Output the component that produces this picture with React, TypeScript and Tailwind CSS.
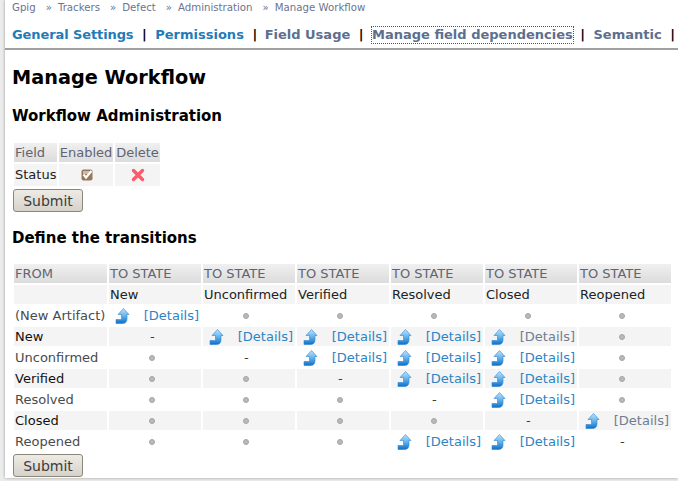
type Cell = "dot" | "dash" | "link" | "muted";

const states = ["New", "Unconfirmed", "Verified", "Resolved", "Closed", "Reopened"];

const rows: { name: string; strong?: boolean; cells: Cell[] }[] = [
  { name: "(New Artifact)", cells: ["link", "dot", "dot", "dot", "dot", "dot"] },
  { name: "New", strong: true, cells: ["dash", "link", "link", "link", "muted", "dot"] },
  { name: "Unconfirmed", cells: ["dot", "dash", "link", "link", "link", "dot"] },
  { name: "Verified", strong: true, cells: ["dot", "dot", "dash", "link", "link", "dot"] },
  { name: "Resolved", cells: ["dot", "dot", "dot", "dash", "link", "dot"] },
  { name: "Closed", strong: true, cells: ["dot", "dot", "dot", "dot", "dash", "muted"] },
  { name: "Reopened", cells: ["dot", "dot", "dot", "link", "link", "dash"] },
];

const crumbs = ["Gpig", "Trackers", "Defect", "Administration", "Manage Workflow"];

function ArrowIcon() {
  return (
    <svg width="15" height="16" viewBox="0 0 15 16" className="shrink-0">
      <defs>
        <linearGradient id="arrowFill" x1="0" y1="0" x2="0" y2="1">
          <stop offset="0" stopColor="#c4e3f9" />
          <stop offset="0.5" stopColor="#62b2ec" />
          <stop offset="1" stopColor="#0f6fc6" />
        </linearGradient>
      </defs>
      <path
        d="M8.5 0.5 L14 6.5 H12 V11 C12 14 10 15.5 7.5 15.5 H1 V11.5 H5.5 C6.3 11.5 6.5 11 6.5 10.5 V6.5 H3 Z"
        fill="url(#arrowFill)"
        stroke="#2a86d6"
        strokeWidth="0.6"
      />
    </svg>
  );
}

function CheckIcon() {
  return (
    <svg width="12" height="12" viewBox="0 0 12 12" className="ml-[22px] block">
      <rect x="0.5" y="0.5" width="11" height="11" rx="2" fill="#96795c" />
      <rect x="2" y="2" width="7" height="3" fill="#c9bcae" />
      <path d="M2.5 5.5 L5 8.5 L10.5 2" fill="none" stroke="#ffffff" strokeWidth="2.2" />
    </svg>
  );
}

function CrossIcon() {
  return (
    <svg width="14" height="14" viewBox="0 0 14 14" className="mx-auto block">
      <path d="M2.5 2.5 L11.5 11.5 M11.5 2.5 L2.5 11.5" stroke="#fb5b6b" strokeWidth="3.4" strokeLinecap="round" />
    </svg>
  );
}

function Dot() {
  return <span className="ml-[40px] block h-[6px] w-[6px] rounded-full border border-[#a5a5a5] bg-[#b9b9b9]" />;
}

function Submit() {
  return (
    <button
      type="button"
      className="ml-[8px] block h-[23px] w-[70px] rounded-[3px] border border-[#8b8778] bg-gradient-to-b from-[#eeebe6] to-[#d6d2ca] text-[14px] leading-none text-[#3c3c3c]"
    >
      Submit
    </button>
  );
}

function TransitionCell({ kind }: { kind: Cell }) {
  if (kind === "dot") return <Dot />;
  if (kind === "dash") return <div className="pl-[41px]">-</div>;
  return (
    <div className="flex items-center justify-between pl-[6px] pr-[2px]">
      <ArrowIcon />
      <span className={kind === "link" ? "text-[#2b84c6]" : "text-[#6f7d92]"}>[Details]</span>
    </div>
  );
}

export default function App() {
  return (
    <div className="h-[481px] w-[678px] overflow-hidden bg-[#ececec] font-['DejaVu_Sans',sans-serif] text-[13px] text-[#3d3d3d]">
      <div className="ml-[5px] h-[478px] bg-white shadow-[0_0_3px_#9a9a9a]">
        <div className="flex h-[13px] items-end pl-[7px] text-[10.2px] leading-none text-[#6b7391]">
          {crumbs.map((crumb, i) => (
            <span key={crumb} className="flex items-center">
              {i > 0 && <span className="ml-[10px] mr-[6px]">»</span>}
              {crumb}
            </span>
          ))}
        </div>

        <div className="mt-[13px] flex h-[24px] items-start whitespace-nowrap border-b-2 border-[#a0a0a0] pl-[7px] text-[13px] font-bold leading-[18px] text-[#5c6f8f]">
          <span className="tracking-[-0.1px] text-[#1f7cb8]">General Settings</span>
          <span className="mx-[8.5px] text-black">|</span>
          <span className="text-[#1f7cb8]">Permissions</span>
          <span className="mx-[8.5px] text-black">|</span>
          <span className="-ml-px">Field Usage</span>
          <span className="ml-[8.5px] mr-[7.5px] text-black">|</span>
          <span className="border border-dotted border-[#555] leading-[16px]">Manage field dependencies</span>
          <span className="ml-[6.5px] mr-[8.5px] text-black">|</span>
          <span>Semantic</span>
          <span className="ml-[8.5px] text-black">|</span>
        </div>

        <h1 className="mt-[16px] pl-[7px] text-[19.3px] font-bold leading-[24px] text-black">Manage Workflow</h1>
        <h2 className="mt-[16px] pl-[7px] text-[15px] font-bold leading-[20px] text-black">Workflow Administration</h2>

        <table className="mb-px ml-[7px] mt-[15px] border-separate border-spacing-[2px] leading-[15px]">
          <thead>
            <tr className="h-[19px] bg-gradient-to-b from-[#f0f0f0] to-[#dcdcdc] text-[#5f6472]">
              <th className="w-[43px] pl-[1px] text-left font-normal">Field</th>
              <th className="w-[54px] text-center font-normal">Enabled</th>
              <th className="w-[45px] text-center font-normal">Delete</th>
            </tr>
          </thead>
          <tbody>
            <tr className="h-[22px] bg-[#f4f4f4]">
              <td className="pb-[2px] pl-[1px] text-[#222]">Status</td>
              <td><CheckIcon /></td>
              <td><CrossIcon /></td>
            </tr>
          </tbody>
        </table>
        <Submit />

        <h2 className="mt-[16px] pl-[7px] text-[15px] font-bold leading-[20px] text-black">Define the transitions</h2>

        <table className="mb-px ml-[7px] mt-[14px] w-[661px] table-fixed border-separate border-spacing-[2px] leading-[15px]">
          <thead>
            <tr className="h-[19px] bg-gradient-to-b from-[#f0f0f0] to-[#dcdcdc] text-[#5f6472]">
              <th className="w-[93px] pl-[1px] text-left font-normal">FROM</th>
              {states.map((state) => (
                <th key={state} className="pl-[1px] text-left font-normal">TO STATE</th>
              ))}
            </tr>
            <tr className="h-[19px] bg-[#f4f4f4] text-[#222]">
              <th />
              {states.map((state) => (
                <th key={state} className="pl-[1px] text-left font-normal">{state}</th>
              ))}
            </tr>
          </thead>
          <tbody>
            {rows.map((row, index) => (
              <tr key={row.name} className={index % 2 === 1 ? "h-[19px] bg-[#f4f4f4]" : "h-[19px]"}>
                <td className={row.strong ? "pl-[1px] text-[#111]" : "pl-[1px] text-[#4a4a4a]"}>{row.name}</td>
                {row.cells.map((cell, i) => (
                  <td key={i}><TransitionCell kind={cell} /></td>
                ))}
              </tr>
            ))}
          </tbody>
        </table>
        <Submit />
      </div>
    </div>
  );
}
